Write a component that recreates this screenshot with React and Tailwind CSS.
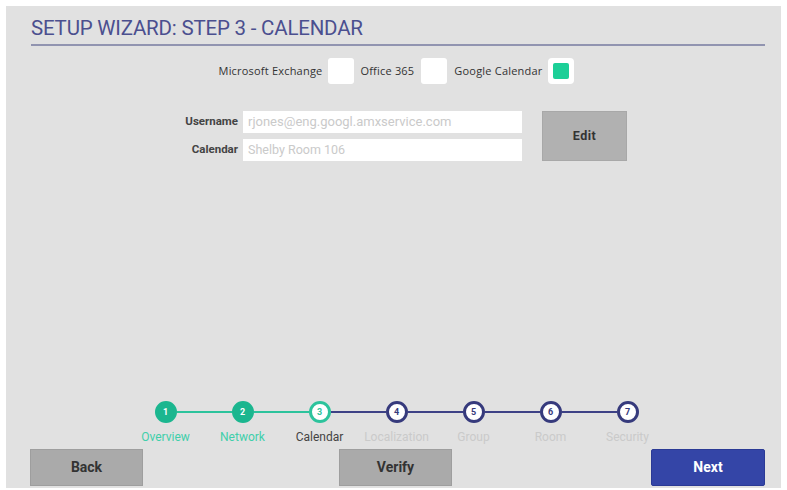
import React from "react";

const steps = [
  { n: 1, label: "Overview", state: "done" },
  { n: 2, label: "Network", state: "done" },
  { n: 3, label: "Calendar", state: "current" },
  { n: 4, label: "Localization", state: "todo" },
  { n: 5, label: "Group", state: "todo" },
  { n: 6, label: "Room", state: "todo" },
  { n: 7, label: "Security", state: "todo" },
];

function Step({ s, i }) {
  const leftColor = i === 0 ? "bg-transparent" : i <= 2 ? "bg-[#2cc39c]" : "bg-[#3d4185]";
  const rightColor = i === 6 ? "bg-transparent" : i <= 1 ? "bg-[#2cc39c]" : "bg-[#3d4185]";
  let circle;
  if (s.state === "done") {
    circle = "bg-[#1bb68f] border-[#1bb68f] text-white";
  } else if (s.state === "current") {
    circle = "bg-white border-[#2cc39c] text-[#2cc39c]";
  } else {
    circle = "bg-white border-[#363a7c] text-[#363a7c]";
  }
  const labelColor =
    s.state === "done" ? "text-[#3fcfaa]" : s.state === "current" ? "text-[#444]" : "text-[#cacaca]";
  return (
    <div className="w-[77px] flex flex-col items-center">
      <div className="w-full flex items-center h-[22px]">
        <div className={`flex-1 h-[2px] ${leftColor}`} />
        <div
          className={`w-[22px] h-[22px] rounded-full border-[3px] flex items-center justify-center text-[9px] font-bold leading-none ${circle}`}
        >
          {s.n}
        </div>
        <div className={`flex-1 h-[2px] ${rightColor}`} />
      </div>
      <div className={`mt-[7px] text-[12px] leading-[14px] ${labelColor}`}>{s.label}</div>
    </div>
  );
}

export default function App() {
  return (
    <div className="w-[787px] h-[490px] bg-white pt-[6px] pl-[6px] pr-[6px] pb-[2px] font-['Roboto',sans-serif]">
      <div className="w-full h-full bg-[#e1e1e1] flex flex-col">
        <div className="pl-[25px] pr-[16px] pt-[10px]">
          <div className="text-[20.5px] leading-[24px] text-[#4b4f8f] tracking-[-0.2px]">
            SETUP WIZARD: STEP 3 - CALENDAR
          </div>
          <div className="mt-[4px] h-[2px] bg-[#9194b0]" />
        </div>

        <div className="flex items-center justify-center mt-[12px] pl-[6px] text-[11px] text-[#333] font-['Open_Sans',sans-serif] tracking-[0.2px]">
          <span>Microsoft Exchange</span>
          <div className="ml-[6px] w-[26px] h-[26px] bg-white rounded-[3px]" />
          <span className="ml-[6px]">Office 365</span>
          <div className="ml-[7px] w-[26px] h-[26px] bg-white rounded-[3px]" />
          <span className="ml-[7px]">Google Calendar</span>
          <div className="ml-[6px] w-[26px] h-[26px] bg-white rounded-[4px] flex items-center justify-center">
            <div className="w-[16px] h-[16px] bg-[#1ccf97] rounded-[2px]" />
          </div>
        </div>

        <div className="flex mt-[27px]">
          <div className="flex flex-col gap-[6px] ml-[160px]">
            <div className="flex items-center">
              <div className="w-[72px] text-right text-[11.5px] font-bold text-[#444]">Username</div>
              <div className="ml-[5px] w-[279px] h-[22px] bg-white flex items-center px-[5px] text-[13px] text-[#cacaca] whitespace-nowrap overflow-hidden">
                rjones@eng.googl.amxservice.com
              </div>
            </div>
            <div className="flex items-center">
              <div className="w-[72px] text-right text-[11.5px] font-bold text-[#444]">Calendar</div>
              <div className="ml-[5px] w-[279px] h-[22px] bg-white flex items-center px-[5px] text-[12.5px] text-[#cacaca]">
                Shelby Room 106
              </div>
            </div>
          </div>
          <div className="ml-[20px] w-[85px] h-[50px] bg-[#b1b1b1] border border-[#a8a8a8] flex items-center justify-center text-[12.5px] font-bold text-[#333] tracking-[0.5px]">
            Edit
          </div>
        </div>

        <div className="flex-1" />

        <div className="flex ml-[121px] mb-[5px]">
          {steps.map((s, i) => (
            <Step key={s.n} s={s} i={i} />
          ))}
        </div>

        <div className="flex items-center px-[24px] pb-[2px]">
          <div className="w-[113px] h-[37px] bg-[#aaaaaa] border border-[#9e9e9e] flex items-center justify-center text-[14px] font-bold text-[#333]">
            Back
          </div>
          <div className="ml-[196px] w-[113px] h-[37px] bg-[#aaaaaa] border border-[#9e9e9e] flex items-center justify-center text-[14px] font-bold text-[#333]">
            Verify
          </div>
          <div className="ml-auto mr-[-8px] w-[114px] h-[37px] bg-[#3445a7] border border-[#2b3a95] rounded-[2px] flex items-center justify-center text-[14px] font-bold text-white">
            Next
          </div>
        </div>
      </div>
    </div>
  );
}
